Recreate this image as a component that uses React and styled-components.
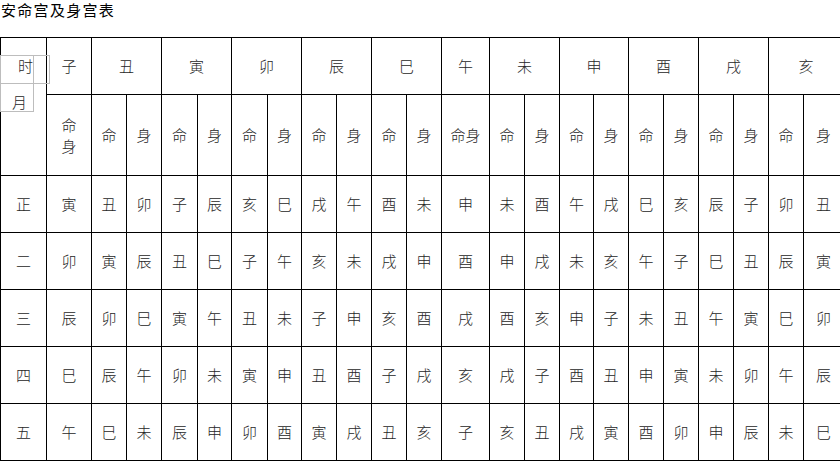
import React from "react";
import styled, { createGlobalStyle } from "styled-components";

const Global = createGlobalStyle`
  html, body { margin: 0; padding: 0; background: #fff; overflow: hidden; }
  body { font-family: "Noto Sans CJK SC", "Noto Sans", sans-serif; color: #222; }
`;

const Page = styled.div`
  width: 840px;
  height: 461px;
  position: relative;
  overflow: hidden;
`;

const Title = styled.div`
  height: 37px;
  padding: 0 0 0 1px;
  font-size: 15px;
  line-height: 20px;
  letter-spacing: 1.3px;
  color: #000;
  box-sizing: border-box;
`;

const COLS = [46, 45, 35, 35, 36, 34, 36, 34, 35, 35, 35, 35, 48, 35, 35, 34, 35, 35, 35, 35, 35, 35, 40];

const Grid = styled.div`
  display: grid;
  grid-template-columns: ${COLS.map((c) => c + "px").join(" ")};
  grid-template-rows: 57px 81px repeat(5, 57px);
  border-top: 1px solid #000;
  border-left: 1px solid #000;
  width: max-content;
`;

const Cell = styled.div`
  box-sizing: border-box;
  border-right: 1px solid #000;
  border-bottom: 1px solid #000;
  display: flex;
  flex-direction: ${(p) => (p.$stack ? "column" : "row")};
  align-items: center;
  justify-content: center;
  font-size: 15px;
  font-weight: 300;
  color: #262626;
  line-height: ${(p) => (p.$stack ? "21px" : "20px")};
  grid-column: span ${(p) => p.$span || 1};
  grid-row: span ${(p) => p.$rows || 1};
  white-space: nowrap;
`;

const Overlay = styled.div`
  position: absolute;
  box-sizing: border-box;
  border: 1px solid #bdbdbd;
  left: ${(p) => p.$x}px;
  top: ${(p) => p.$y}px;
  width: ${(p) => p.$w}px;
  height: ${(p) => p.$h}px;
  font-size: 15px;
  font-weight: 300;
  line-height: 18px;
  color: #262626;
  display: flex;
  align-items: flex-end;
  padding-left: ${(p) => p.$pl}px;
  padding-bottom: ${(p) => p.$pb}px;
`;

const BRANCHES = ["丑", "寅", "卯", "辰", "巳"];
const BRANCHES2 = ["未", "申", "酉", "戌", "亥"];

const ROWS = [
  { m: "正", zi: "寅", a: ["丑", "卯", "子", "辰", "亥", "巳", "戌", "午", "酉", "未"], wu: "申", b: ["未", "酉", "午", "戌", "巳", "亥", "辰", "子", "卯", "丑"] },
  { m: "二", zi: "卯", a: ["寅", "辰", "丑", "巳", "子", "午", "亥", "未", "戌", "申"], wu: "酉", b: ["申", "戌", "未", "亥", "午", "子", "巳", "丑", "辰", "寅"] },
  { m: "三", zi: "辰", a: ["卯", "巳", "寅", "午", "丑", "未", "子", "申", "亥", "酉"], wu: "戌", b: ["酉", "亥", "申", "子", "未", "丑", "午", "寅", "巳", "卯"] },
  { m: "四", zi: "巳", a: ["辰", "午", "卯", "未", "寅", "申", "丑", "酉", "子", "戌"], wu: "亥", b: ["戌", "子", "酉", "丑", "申", "寅", "未", "卯", "午", "辰"] },
  { m: "五", zi: "午", a: ["巳", "未", "辰", "申", "卯", "酉", "寅", "戌", "丑", "亥"], wu: "子", b: ["亥", "丑", "戌", "寅", "酉", "卯", "申", "辰", "未", "巳"] },
];

export default function App() {
  return (
    <Page>
      <Global />
      <Title>安命宫及身宫表</Title>
      <Grid>
        <Cell $rows={2} />
        <Cell>子</Cell>
        {BRANCHES.map((b) => (
          <Cell key={b} $span={2}>{b}</Cell>
        ))}
        <Cell>午</Cell>
        {BRANCHES2.map((b) => (
          <Cell key={b} $span={2}>{b}</Cell>
        ))}

        <Cell $stack>
          <span>命</span>
          <span>身</span>
        </Cell>
        {BRANCHES.map((b) => (
          <React.Fragment key={"h" + b}>
            <Cell>命</Cell>
            <Cell>身</Cell>
          </React.Fragment>
        ))}
        <Cell>命身</Cell>
        {BRANCHES2.map((b) => (
          <React.Fragment key={"h" + b}>
            <Cell>命</Cell>
            <Cell>身</Cell>
          </React.Fragment>
        ))}

        {ROWS.map((r) => (
          <React.Fragment key={r.m}>
            <Cell>{r.m}</Cell>
            <Cell>{r.zi}</Cell>
            {r.a.map((v, i) => (
              <Cell key={"a" + i}>{v}</Cell>
            ))}
            <Cell>{r.wu}</Cell>
            {r.b.map((v, i) => (
              <Cell key={"b" + i}>{v}</Cell>
            ))}
          </React.Fragment>
        ))}
      </Grid>
      <Overlay $x={0} $y={55} $w={50} $h={29} $pl={17} $pb={8}>时</Overlay>
      <Overlay $x={0} $y={55} $w={34} $h={57} $pl={11} $pb={0}>月</Overlay>
    </Page>
  );
}
